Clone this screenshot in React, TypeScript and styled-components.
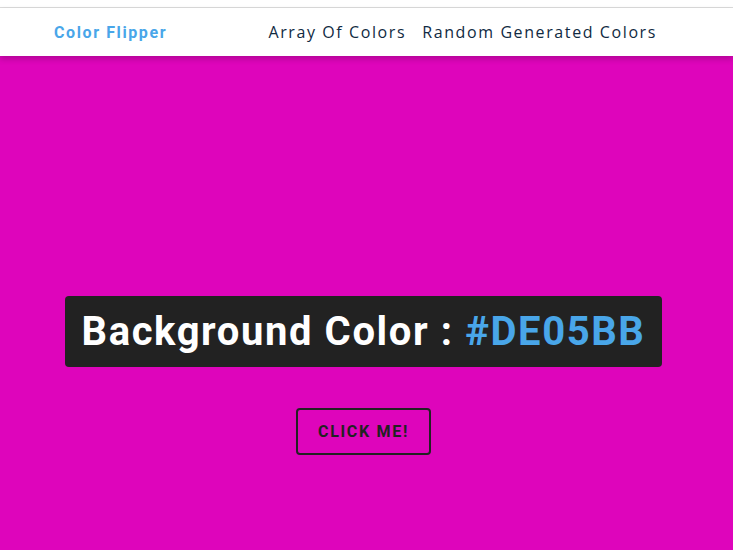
import React, { useState } from "react";
import styled, { createGlobalStyle } from "styled-components";

const GlobalStyle = createGlobalStyle`
  * {
    margin: 0;
    padding: 0;
    box-sizing: border-box;
  }
  body {
    font-family: "Open Sans", "Liberation Sans", sans-serif;
    background: #fff;
    color: #102a42;
    overflow: hidden;
  }
`;

const colors = ["#DE05BB", "#49A6E9", "#F15025", "#2ECC71", "rgba(133,122,200)"];

const Page = styled.div`
  height: 550px;
  display: flex;
  flex-direction: column;
`;

const TopStrip = styled.div`
  height: 8px;
  background: #fff;
  border-bottom: 1px solid #dcdcdc;
`;

const Nav = styled.nav`
  position: relative;
  z-index: 1;
  height: 48px;
  background: #fff;
  display: flex;
  align-items: center;
  justify-content: space-between;
  padding: 0 76px 0 54px;
  box-shadow: 0 3px 6px rgba(0, 0, 0, 0.2);
`;

const Logo = styled.h4`
  font-family: Roboto, "Liberation Sans", sans-serif;
  font-size: 16px;
  font-weight: 700;
  letter-spacing: 1.6px;
  color: #49a6e9;
`;

const Links = styled.ul`
  list-style: none;
  display: flex;
  gap: 16px;
`;

const LinkItem = styled.li`
  font-size: 16px;
  letter-spacing: 1.6px;
  color: #102a42;
`;

const Main = styled.main<{ $bg: string }>`
  flex: 1;
  background: ${(p) => p.$bg};
  display: flex;
  flex-direction: column;
  align-items: center;
  padding: 240px 6px 0 0;
`;

const Banner = styled.h2`
  font-family: Roboto, "Liberation Sans", sans-serif;
  font-size: 40px;
  font-weight: 700;
  line-height: 47px;
  letter-spacing: 1.6px;
  color: #fff;
  background: #222;
  padding: 12px 17px;
  border-radius: 4px;
`;

const ColorValue = styled.span`
  color: #49a6e9;
`;

const Button = styled.button`
  margin-top: 41px;
  font-family: Roboto, "Liberation Sans", sans-serif;
  font-size: 16px;
  font-weight: 700;
  line-height: 19px;
  letter-spacing: 1.7px;
  text-transform: uppercase;
  color: #222;
  background: transparent;
  border: 2px solid #222;
  border-radius: 4px;
  padding: 12px 20px;
  cursor: pointer;
`;

const App = () => {
  const [index, setIndex] = useState(0);
  const color = colors[index];

  return (
    <>
      <GlobalStyle />
      <Page>
        <TopStrip />
        <Nav>
          <Logo>Color Flipper</Logo>
          <Links>
            <LinkItem>Array Of Colors</LinkItem>
            <LinkItem>Random Generated Colors</LinkItem>
          </Links>
        </Nav>
        <Main $bg={color}>
          <Banner>
            Background Color : <ColorValue>{color}</ColorValue>
          </Banner>
          <Button onClick={() => setIndex((index + 1) % colors.length)}>
            Click Me!
          </Button>
        </Main>
      </Page>
    </>
  );
};

export default App;
